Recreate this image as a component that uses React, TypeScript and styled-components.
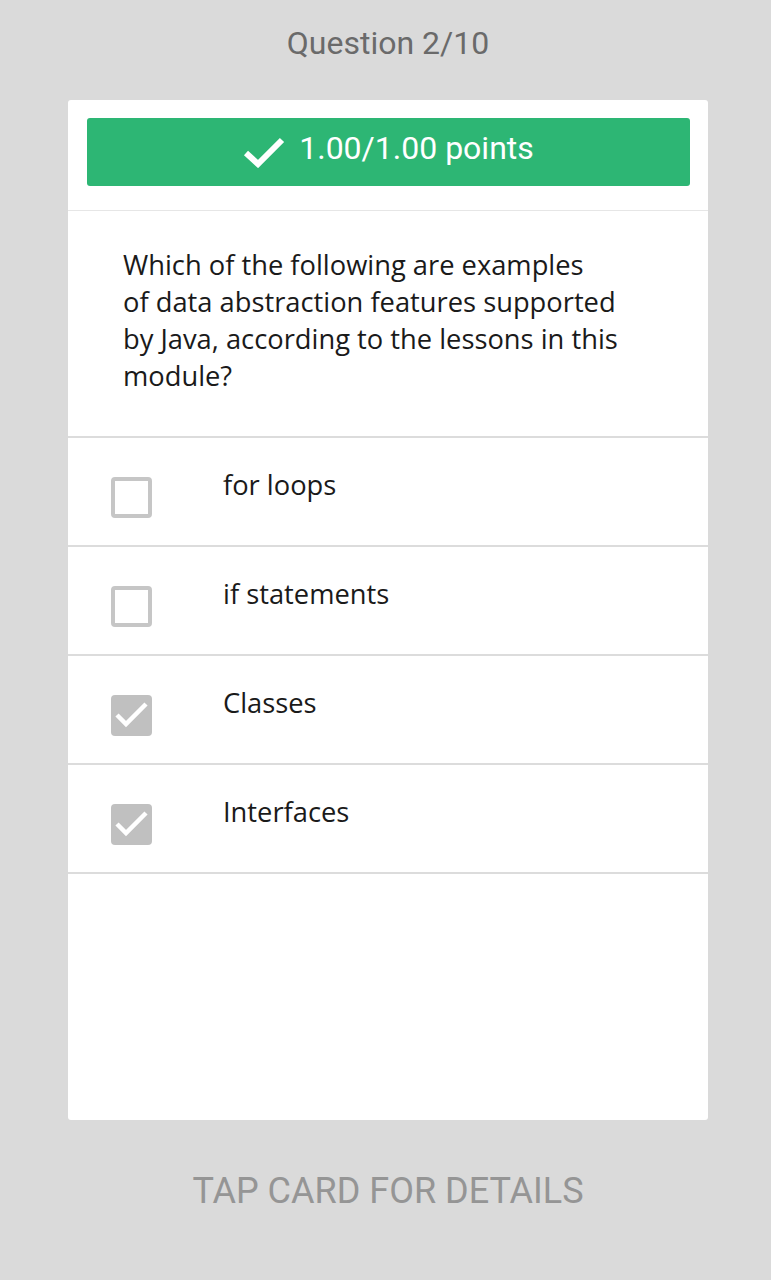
import React from 'react';
import styled, {createGlobalStyle} from 'styled-components';

const GlobalStyle = createGlobalStyle`
  html, body {
    margin: 0;
    padding: 0;
    background: #dadada;
  }
`;

const Screen = styled.div`
  width: 771px;
  height: 1280px;
  box-sizing: border-box;
  padding-left: 5px;
  display: flex;
  flex-direction: column;
  align-items: center;
  background: #dadada;
  font-family: Roboto, 'Liberation Sans', sans-serif;
`;

const Counter = styled.div`
  height: 100px;
  display: flex;
  align-items: center;
  padding-bottom: 14px;
  box-sizing: border-box;
  font-size: 32px;
  color: #6a6a6a;
`;

const Card = styled.div`
  width: 640px;
  height: 1020px;
  background: #fff;
  border-radius: 3px;
  display: flex;
  flex-direction: column;
`;

const BannerWrap = styled.div`
  padding: 18px 18px 24px 19px;
  border-bottom: 1px solid #e6e6e6;
`;

const Banner = styled.div`
  height: 68px;
  box-sizing: border-box;
  padding-bottom: 9px;
  background: #2db674;
  border-radius: 3px;
  display: flex;
  align-items: center;
  justify-content: center;
  gap: 14px;
  color: #fff;
  font-size: 32px;
`;

const CheckMark = styled.svg`
  margin-top: 8px;
`;

const Question = styled.div`
  padding: 35px 0 42px 55px;
  border-bottom: 2px solid #dcdcdc;
`;

const QuestionText = styled.div`
  font-family: 'Open Sans', 'Liberation Sans', sans-serif;
  font-size: 27.3px;
  line-height: 37px;
  color: #1a1a1a;
`;

const Option = styled.div`
  height: 109px;
  display: flex;
  align-items: flex-start;
  border-bottom: 2px solid #dcdcdc;
  box-sizing: border-box;
`;

const Box = styled.div<{$checked: boolean}>`
  width: 41px;
  height: 41px;
  box-sizing: border-box;
  margin: 39px 0 0 43px;
  border-radius: 4px;
  border: ${p => (p.$checked ? 'none' : '4px solid #c6c6c6')};
  background: ${p => (p.$checked ? '#c0c0c0' : '#fff')};
  display: flex;
`;

const OptionLabel = styled.div`
  margin: 28px 0 0 71px;
  font-family: 'Open Sans', 'Liberation Sans', sans-serif;
  font-size: 27.3px;
  line-height: 37px;
  color: #1a1a1a;
`;

const Footer = styled.div`
  flex: 1;
  display: flex;
  align-items: center;
  padding-bottom: 18px;
  font-size: 36px;
  color: #959595;
`;

const options = [
  {label: 'for loops', checked: false},
  {label: 'if statements', checked: false},
  {label: 'Classes', checked: true},
  {label: 'Interfaces', checked: true},
];

function App() {
  return (
    <Screen>
      <GlobalStyle />
      <Counter>Question 2/10</Counter>
      <Card>
        <BannerWrap>
          <Banner>
            <CheckMark width="42" height="32" viewBox="0 0 42 32">
              <path d="M3 17 L15 28 L39 4" fill="none" stroke="#fff" strokeWidth="6" strokeLinejoin="miter" />
            </CheckMark>
            <span>1.00/1.00 points</span>
          </Banner>
        </BannerWrap>
        <Question>
          <QuestionText>
            Which of the following are examples
            <br />
            of data abstraction features supported
            <br />
            by Java, according to the lessons in this
            <br />
            module?
          </QuestionText>
        </Question>
        {options.map(o => (
          <Option key={o.label}>
            <Box $checked={o.checked}>
              {o.checked && (
                <svg width="41" height="41" viewBox="0 0 41 41">
                  <path d="M6 20 L15 29 L35 9" fill="none" stroke="#fff" strokeWidth="4.5" />
                </svg>
              )}
            </Box>
            <OptionLabel>{o.label}</OptionLabel>
          </Option>
        ))}
      </Card>
      <Footer>TAP CARD FOR DETAILS</Footer>
    </Screen>
  );
}

export default App;
